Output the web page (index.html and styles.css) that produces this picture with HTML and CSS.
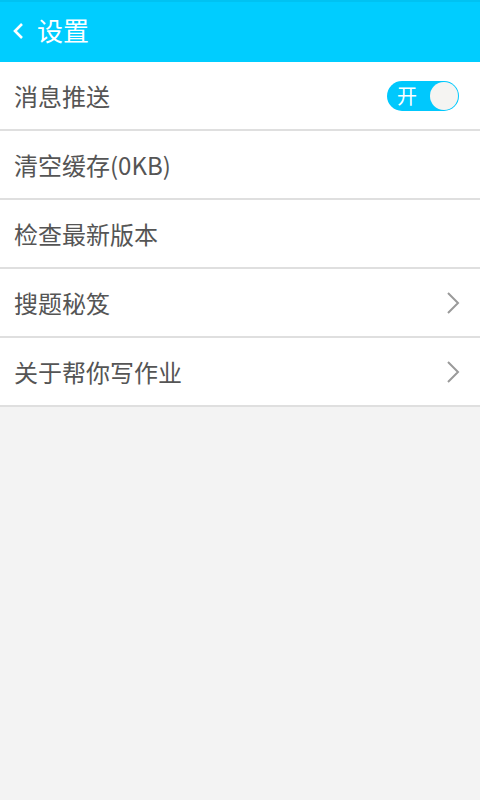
FILE: index.html
```html
<!DOCTYPE html>
<html lang="zh-CN">
<head>
   <meta charset="UTF-8"><title>设置</title>
   <link rel="stylesheet" href="styles.css">
</head> <body>

<header class="topbar">
   <svg class="back" width="12" height="18" viewBox="0 0 12 18"><path d="M10 2 L3 9 L10 16" fill="none" stroke="#fff" stroke-width="2.6"/></svg>
   <h1>设置</h1>
</header>

<ul class="settings">
   <li><span>消息推送</span>
      <span class="toggle"><b>开</b><i></i></span></li>
   <li><span>清空缓存(0KB)</span></li>
   <li><span>检查最新版本</span></li>
   <li><span>搜题秘笈</span>
      <svg class="arrow" width="14" height="22" viewBox="0 0 14 22"><path d="M2 1 L12 11 L2 21" fill="none" stroke="#9a9a9a" stroke-width="2"/></svg></li>
   <li><span>关于帮你写作业</span>
      <svg class="arrow" width="14" height="22" viewBox="0 0 14 22"><path d="M2 1 L12 11 L2 21" fill="none" stroke="#9a9a9a" stroke-width="2"/></svg></li>
</ul>

</body> </html>
```
FILE: styles.css
```css
body {
   margin: 0;
   background: #f3f3f3;
   font-family: "Noto Sans CJK SC", "Roboto", sans-serif;
}

.topbar {
   height: 62px;
   background: #00cdff;
   border-top: 2px solid #00c2f2;
   box-sizing: border-box;
   display: flex;
   align-items: center;
   padding: 0 0 4px 12px;
   color: #fff;
}

.back {
   margin-right: 13px;
   margin-top: 2px;
}

h1 {
   margin: 0;
   font-size: 26px;
   line-height: 1;
   font-weight: normal;
}

.settings {
   list-style: none;
   margin: 0;
   padding: 0;
   background: #fff;
}

.settings li {
   height: 67px;
   border-bottom: 2px solid #dfdfdf;
   display: flex;
   align-items: center;
   justify-content: space-between;
   padding: 0 20px 0 14px;
   font-size: 24px;
   color: #555;
}

.toggle {
   width: 72px;
   height: 30px;
   border-radius: 15px;
   background: #00c8fd;
   display: flex;
   align-items: center;
   justify-content: space-between;
   padding: 0 1px 0 10px;
   box-sizing: border-box;
   margin-right: 1px;
}

.toggle b {
   font-weight: normal;
   color: #fff;
   font-size: 20px;
}

.toggle i {
   width: 28px;
   height: 28px;
   border-radius: 50%;
   background: #f5f4f2;
}
```
